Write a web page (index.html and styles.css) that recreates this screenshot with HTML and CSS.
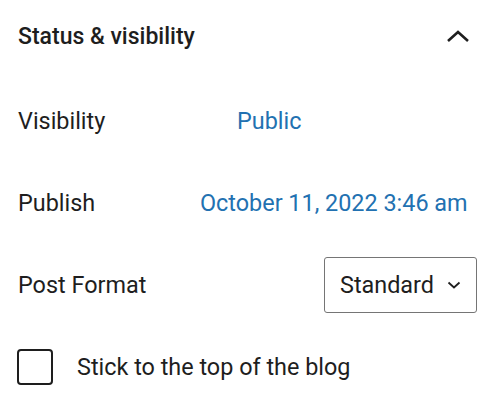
FILE: index.html
```html
<!DOCTYPE html>
<html>
<head>
<meta charset="utf-8">
<link rel="stylesheet" href="styles.css">
</head>
<body>
<div class="panel">
  <div class="header">
    <span class="title">Status &amp; visibility</span>
    <svg class="chev-up" width="24" height="24" viewBox="0 0 24 24"><path d="M2 17 L12 8 L22 17" fill="none" stroke="#1e1e1e" stroke-width="2.6"/></svg>
  </div>
  <div class="body">
    <div class="row">
      <span class="label">Visibility</span>
      <span class="link link-visibility">Public</span>
    </div>
    <div class="row">
      <span class="label">Publish</span>
      <span class="link">October 11, 2022 3:46 am</span>
    </div>
    <div class="row row-format">
      <span class="label">Post Format</span>
      <div class="select">
        <span>Standard</span>
        <svg width="16" height="16" viewBox="0 0 16 16"><path d="M2.5 5.5 L8 10.5 L13.5 5.5" fill="none" stroke="#1e1e1e" stroke-width="1.8"/></svg>
      </div>
    </div>
    <div class="row row-check">
      <span class="checkbox"></span>
      <span class="check-label">Stick to the top of the blog</span>
    </div>
  </div>
</div>
</body>
</html>
```
FILE: styles.css
```css
html, body {
  margin: 0;
  padding: 0;
  background: #fff;
}
body {
  font-family: Roboto, "Noto Sans", sans-serif;
  color: #1e1e1e;
  font-size: 23.4px;
}
.panel {
  padding: 0 22px 0 18px;
}
.header {
  height: 72px;
  display: flex;
  align-items: center;
  justify-content: space-between;
}
.title {
  font-size: 23px;
  font-weight: 500;
}
.chev-up {
  margin-right: 7px;
}
.body {
  padding-top: 21px;
  display: flex;
  flex-direction: column;
  gap: 26px;
}
.row {
  height: 56px;
  display: flex;
  align-items: center;
}
.label {
  width: 182px;
  flex: none;
}
.link {
  color: #2271b1;
}
.link-visibility {
  margin-left: 37px;
}
.row-format {
  justify-content: space-between;
}
.select {
  box-sizing: border-box;
  width: 153px;
  height: 56px;
  border: 1.5px solid #757575;
  border-radius: 3px;
  display: flex;
  align-items: center;
  justify-content: space-between;
  padding: 0 14px 0 15px;
}
.checkbox {
  box-sizing: border-box;
  width: 36px;
  height: 36px;
  border: 2px solid #1e1e1e;
  border-radius: 4px;
  margin-left: -1px;
  flex: none;
}
.check-label {
  margin-left: 24px;
}
```
